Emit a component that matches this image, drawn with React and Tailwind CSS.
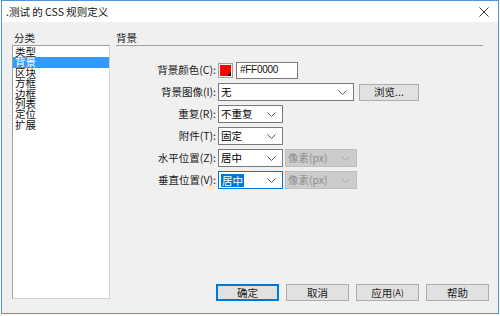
// App.jsx - CSS rule definition dialog (Background category)

const categories = ["类型", "背景", "区块", "方框", "边框", "列表", "定位", "扩展"];

const Chevron = ({ color = "#444" }) => (
  <svg width="9" height="5" viewBox="0 0 9 5">
    <polyline
      points="0.5,0.5 4.5,4.5 8.5,0.5"
      fill="none"
      stroke={color}
      strokeWidth="1"
    />
  </svg>
);

const Select = ({ value, width, disabled, focused, selected }) => {
  const box = disabled
    ? "bg-[#cccccc] border-[#bfbfbf] text-[#8c8c8c]"
    : focused
      ? "bg-white border-[#0078d7] text-black"
      : "bg-white border-[#7a7a7a] text-black";

  return (
    <div
      className={`flex items-center justify-between h-[18px] border pl-[2px] pr-[6px] ${box} ${width}`}
    >
      <span
        className={
          selected ? "bg-[#0078d7] text-white leading-[13px] px-[1px]" : ""
        }
      >
        {value}
      </span>
      <Chevron color={disabled ? "#a8a8a8" : "#555"} />
    </div>
  );
};

const Row = ({ label, children }) => (
  <div className="flex items-center h-[18px]">
    <div className="w-[100px] text-right text-[#1a1a1a]">{label}</div>
    <div className="flex items-center gap-[2px] ml-[2px]">{children}</div>
  </div>
);

const Button = ({ children, primary }) => (
  <button
    className={`w-[63px] h-[17px] flex items-center justify-center bg-[#e1e1e1] text-[#1a1a1a] ${
      primary ? "border-2 border-[#0078d7]" : "border border-[#adadad]"
    }`}
  >
    {children}
  </button>
);

export default function App() {
  return (
    <div className="w-[500px] h-[316px] bg-white font-['Noto_Sans_CJK_SC',sans-serif] text-[10.5px] leading-[12px]">
      <div className="ml-[1px] w-[498px] h-[314px] border border-[#4a97e0] flex flex-col">
        {/* Title bar */}
        <div className="h-[21px] bg-white flex items-center justify-between pl-[4px] pr-[9px]">
          <span className="text-[10.5px] text-[#111]">.测试 的 CSS 规则定义</span>
          <svg width="10" height="10" viewBox="0 0 10 10">
            <path d="M0.5 0.5 L9.5 9.5 M9.5 0.5 L0.5 9.5" stroke="#333" strokeWidth="1" />
          </svg>
        </div>

        {/* Body */}
        <div className="flex-1 bg-[#f0f0f0] flex gap-[6px] pl-[10px] pr-[9px] pt-[10px] pb-[12px]">
          {/* Category list */}
          <div className="w-[98px] flex flex-col mb-[2px]">
            <div className="h-[12px] pl-[2px] text-[#1a1a1a]">分类</div>
            <div className="flex-1 mt-[1px] bg-white border border-[#a0a0a0] border-r-[#d0d0d0] border-b-[#d0d0d0] pt-[1px]">
              {categories.map((c) => (
                <div
                  key={c}
                  className={`h-[10.4px] leading-[10.4px] pl-[2px] ${
                    c === "背景" ? "bg-[#3399ff] text-white" : "text-[#111]"
                  }`}
                >
                  {c}
                </div>
              ))}
            </div>
          </div>

          {/* Panel */}
          <div className="flex-1 flex flex-col">
            <div className="h-[12px] text-[#1a1a1a]">背景</div>
            <div className="mt-[1px] mr-[6px] border-t border-[#a0a0a0]" />

            <div className="mt-[15px] flex flex-col gap-[4px]">
              <Row label="背景颜色(C):">
                <div className="w-[15px] h-[15px] border border-[#a0a0a0] bg-white p-[1px]">
                  <div className="relative w-full h-full bg-[#ff0000]">
                    <svg
                      className="absolute right-0 bottom-0"
                      width="4"
                      height="4"
                      viewBox="0 0 4 4"
                    >
                      <polygon points="4,0 4,4 0,4" fill="#000" />
                    </svg>
                  </div>
                </div>
                <div className="ml-[1px] w-[62px] h-[17px] bg-white border border-[#7a7a7a] pl-[3px] flex items-center font-['Liberation_Sans',sans-serif] text-[10px] tracking-[-0.3px] text-[#111]">
                  #FF0000
                </div>
              </Row>
              <Row label="背景图像(I):">
                <Select value="无" width="w-[136px]" />
                <button className="ml-[3px] w-[60px] h-[17px] bg-[#e1e1e1] border border-[#adadad] text-[#1a1a1a] flex items-center justify-center">
                  浏览...
                </button>
              </Row>
              <Row label="重复(R):">
                <Select value="不重复" width="w-[65px]" />
              </Row>
              <Row label="附件(T):">
                <Select value="固定" width="w-[65px]" />
              </Row>
              <Row label="水平位置(Z):">
                <Select value="居中" width="w-[65px]" />
                <Select value="像素(px)" width="w-[72px]" disabled />
              </Row>
              <Row label="垂直位置(V):">
                <Select value="居中" width="w-[65px]" focused selected />
                <Select value="像素(px)" width="w-[72px]" disabled />
              </Row>
            </div>

            {/* Actions */}
            <div className="mt-auto flex justify-end gap-[7px]">
              <Button primary>确定</Button>
              <Button>取消</Button>
              <Button>
                应用<span className="text-[9px]">(A)</span>
              </Button>
              <Button>帮助</Button>
            </div>
          </div>
        </div>
      </div>
    </div>
  );
}
